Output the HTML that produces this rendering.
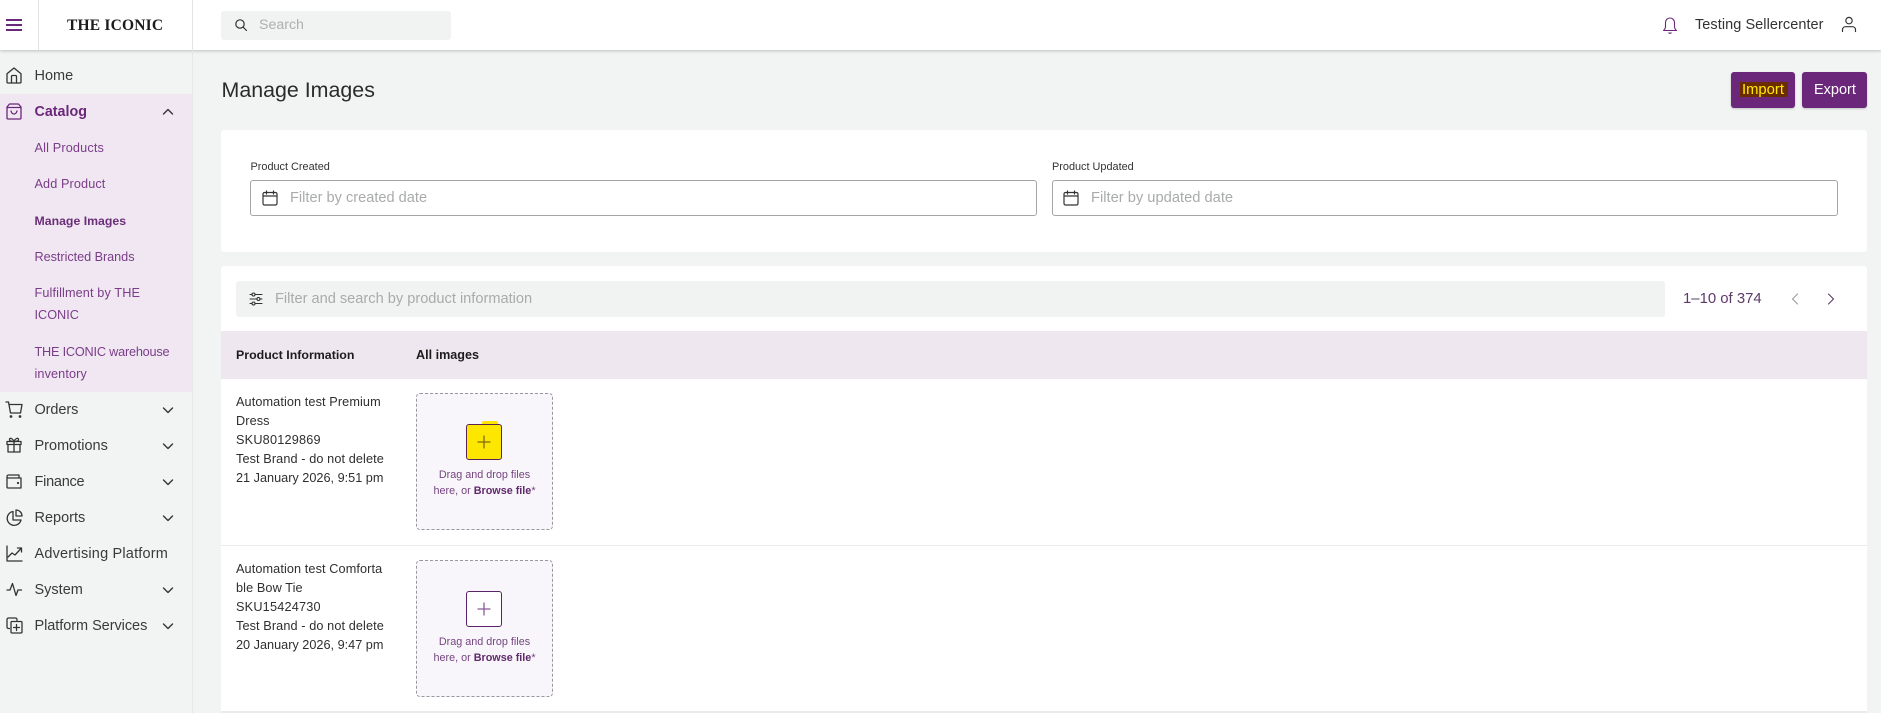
<!DOCTYPE html>
<html lang="en"><head><meta charset="utf-8"><title>Manage Images</title>
<style>
*{box-sizing:border-box}
html,body{margin:0;padding:0;width:1881px;height:713px;overflow:hidden;background:#f2f4f4;font-family:"Liberation Sans",sans-serif;color:#2b2b2b}
.a{position:absolute}
.t{position:absolute;white-space:nowrap;height:20px;line-height:20px}
svg{position:absolute;overflow:visible;fill:none;stroke-linecap:round;stroke-linejoin:round}
.nav{font-size:14.5px;color:#3a3a3a;left:34.5px}
.sub{font-size:12.7px;color:#7a3d87;left:34.5px}
.ic{stroke:#333;stroke-width:1.3}
.row{font-size:12.7px;color:#2f2f2f;left:236px;letter-spacing:.1px}
.dz{position:absolute;left:416px;width:137px;height:137px;border:1px dashed #9a96a0;border-radius:4px;background:#f9f6fb}
.plus{position:absolute;left:466px;width:36px;height:36px;border:1.5px solid #5a2368;border-radius:3px;background:#fff}
.dt{font-size:10.8px;color:#74447f;left:416px;width:137px;text-align:center}
.dt b{color:#5f2a6b}
.ph{font-size:14.6px;color:#a9abab}
.lbl{font-size:10.9px;color:#333}
</style></head><body>

<!-- top bar -->
<div class="a" style="left:0;top:0;width:1881px;height:50px;background:#fff;box-shadow:0 1px 3px rgba(0,0,0,.22)"></div>
<div class="a" style="left:38px;top:0;width:1px;height:50px;background:#e2e3e3"></div>
<div class="a" style="left:192px;top:0;width:1px;height:50px;background:#e2e3e3"></div>
<div class="a" style="left:6px;top:19px;width:16px;height:2px;background:#6b2779"></div>
<div class="a" style="left:6px;top:24px;width:16px;height:2px;background:#6b2779"></div>
<div class="a" style="left:6px;top:29px;width:16px;height:2px;background:#6b2779"></div>
<div class="t" style="left:67px;top:15.5px;font-family:'Liberation Serif',serif;font-weight:bold;font-size:15.5px;color:#1c1c1c;letter-spacing:.2px">THE ICONIC</div>
<div class="a" style="left:221px;top:11px;width:230px;height:29px;background:#f1f3f3;border-radius:3px"></div>
<svg style="left:234px;top:18px" width="14" height="14" viewBox="0 0 14 14" stroke="#333" stroke-width="1.2"><circle cx="6" cy="6" r="4.2"/><path d="M9.2 9.2L12.5 12.5"/></svg>
<div class="t ph" style="left:259px;top:15px;color:#aeb0b0;font-size:14.2px">Search</div>
<svg style="left:1662px;top:15px" width="16" height="20" viewBox="0 0 16 20" stroke="#6b2779" stroke-width="1.1"><path d="M1.5 15.5c1.2-1 1.9-2.2 2-4V7.5a4.5 4.5 0 0 1 9 0v4c.1 1.8.8 3 2 4z"/><path d="M6.8 17.8c.7.6 1.7.6 2.4 0"/></svg>
<div class="t" style="left:1695px;top:15px;font-size:14.5px;color:#333;letter-spacing:.06px">Testing Sellercenter</div>
<svg style="left:1841px;top:16px" width="16" height="17" viewBox="0 0 16 17" stroke="#333" stroke-width="1.2"><circle cx="8" cy="4.6" r="3.2"/><path d="M1.5 15.5v-1.8c0-1.8 1.4-3 3.2-3h6.6c1.8 0 3.2 1.2 3.2 3v1.8"/></svg>

<!-- sidebar -->
<div class="a" style="left:192px;top:50px;width:1px;height:663px;background:#e6e8e8"></div>
<div class="a" style="left:0;top:94px;width:192px;height:298px;background:#f0e7f3"></div>

<svg class="ic" style="left:6px;top:67px" width="16" height="17" viewBox="0 0 16 17"><path d="M1 6.8L8 1l7 5.8V15a1 1 0 0 1-1 1H2a1 1 0 0 1-1-1z"/><path d="M5.5 16V9.5a1 1 0 0 1 1-1h3a1 1 0 0 1 1 1V16"/></svg>
<div class="t nav" style="top:66px">Home</div>
<svg style="left:6px;top:103px" stroke="#6b2779" stroke-width="1.3" width="16" height="17" viewBox="0 0 16 17"><path d="M3.5 1h9L15 4v11a1 1 0 0 1-1 1H2a1 1 0 0 1-1-1V4z"/><path d="M1 4.5h14"/><path d="M5 8c.5 2 1.600 3 3 3s2.500-1 3-3"/></svg>
<div class="t nav" style="top:102px;color:#6b2779;font-weight:bold;font-size:14.3px">Catalog</div>
<svg style="left:162px;top:108px" stroke="#333" stroke-width="1.4" width="12" height="7" viewBox="0 0 12 7"><path d="M1.500 6L6 1.500 10.500 6"/></svg>

<div class="t sub" style="top:138px;letter-spacing:.15px">All Products</div>
<div class="t sub" style="top:174px;letter-spacing:.1px">Add Product</div>
<div class="t sub" style="top:211px;font-weight:bold;color:#6b2f78;font-size:12.3px">Manage Images</div>
<div class="t sub" style="top:247px;letter-spacing:-.05px">Restricted Brands</div>
<div class="t sub" style="top:283px;letter-spacing:.12px">Fulfillment by THE</div>
<div class="t sub" style="top:305px">ICONIC</div>
<div class="t sub" style="top:342px;letter-spacing:-.2px">THE ICONIC warehouse</div>
<div class="t sub" style="top:364px;letter-spacing:.1px">inventory</div>

<svg class="ic" style="left:5px;top:401px" width="18" height="17" viewBox="0 0 18 17"><path d="M1 1h2.500l2 11h10l1.500-8.500H4"/><circle cx="6" cy="15.500" r=".7"/><circle cx="15" cy="15.500" r=".7"/></svg>
<div class="t nav" style="top:400px;letter-spacing:-.1px">Orders</div>
<svg class="ic" style="left:6px;top:437px" width="16" height="16" viewBox="0 0 16 16"><path d="M1 4.500h14v3H1zM2 7.500V15h12V7.500M8 4.500V15"/><path d="M8 4.500C6.500 1 3.500.500 3.500 2.500S6 4.500 8 4.500zM8 4.500C9.500 1 12.500.500 12.500 2.500S10 4.500 8 4.500z"/></svg>
<div class="t nav" style="top:436px">Promotions</div>
<svg class="ic" style="left:6px;top:474px" width="16" height="15" viewBox="0 0 16 15"><path d="M1 3.500V13a1 1 0 0 0 1 1h13V4H2.500A1.500 1.500 0 0 1 1 2.500 1.500 1.500 0 0 1 2.500 1H13v3"/><circle cx="12" cy="9" r=".5"/></svg>
<div class="t nav" style="top:472px;letter-spacing:-.25px">Finance</div>
<svg class="ic" style="left:6px;top:509px" width="17" height="17" viewBox="0 0 17 17"><path d="M7 2.500a7 7 0 1 0 8 8.500H7z"/><path d="M10 1a6 6 0 0 1 6 6h-6z"/></svg>
<div class="t nav" style="top:508px">Reports</div>
<svg class="ic" style="left:6px;top:545px" width="17" height="17" viewBox="0 0 17 17"><path d="M1 1v15h15"/><path d="M2 12l4-4 3 2 6-6.500"/><path d="M11.500 3H15.500V7"/></svg>
<div class="t nav" style="top:544px;letter-spacing:.19px">Advertising Platform</div>
<svg class="ic" style="left:6px;top:582px" width="17" height="15" viewBox="0 0 17 15"><path d="M1 8h3l2.500-6.500 3.500 12 2-5.500h3.500"/></svg>
<div class="t nav" style="top:580px">System</div>
<svg class="ic" style="left:6px;top:617px" width="17" height="17" viewBox="0 0 17 17"><path d="M3.500 11.500H2.500a1.500 1.500 0 0 1-1.500-1.500V2.500A1.500 1.500 0 0 1 2.500 1h7A1.500 1.500 0 0 1 11 2.500v1"/><rect x="5" y="4.500" width="11" height="11.500" rx="1"/><path d="M10.500 7.500v6M7.500 10.500h6"/></svg>
<div class="t nav" style="top:616px;letter-spacing:-.05px">Platform Services</div>

<svg style="left:162px;top:407px" stroke="#333" stroke-width="1.4" width="12" height="7" viewBox="0 0 12 7"><path d="M1.500 1L6 5.500 10.500 1"/></svg>
<svg style="left:162px;top:443px" stroke="#333" stroke-width="1.4" width="12" height="7" viewBox="0 0 12 7"><path d="M1.500 1L6 5.500 10.500 1"/></svg>
<svg style="left:162px;top:479px" stroke="#333" stroke-width="1.4" width="12" height="7" viewBox="0 0 12 7"><path d="M1.500 1L6 5.500 10.500 1"/></svg>
<svg style="left:162px;top:515px" stroke="#333" stroke-width="1.4" width="12" height="7" viewBox="0 0 12 7"><path d="M1.500 1L6 5.500 10.500 1"/></svg>
<svg style="left:162px;top:587px" stroke="#333" stroke-width="1.4" width="12" height="7" viewBox="0 0 12 7"><path d="M1.500 1L6 5.500 10.500 1"/></svg>
<svg style="left:162px;top:623px" stroke="#333" stroke-width="1.4" width="12" height="7" viewBox="0 0 12 7"><path d="M1.500 1L6 5.500 10.500 1"/></svg>

<!-- header -->
<div class="t" style="left:221.500px;top:78px;height:24px;line-height:24px;font-size:21.4px;color:#2b2b2b">Manage Images</div>
<div class="a" style="left:1731px;top:72px;width:64px;height:36px;background:#6b2779;border-radius:3px;box-shadow:0 1px 2px rgba(0,0,0,.2)"></div>
<div class="a" style="left:1740px;top:82px;width:48px;height:15px;background:#6b2c00"></div>
<div class="t" style="left:1742px;top:80px;font-size:14.8px;color:#ffee00">Import</div>
<div class="a" style="left:1802px;top:72px;width:65px;height:36px;background:#6b2779;border-radius:3px;box-shadow:0 1px 2px rgba(0,0,0,.2)"></div>
<div class="t" style="left:1814px;top:80px;font-size:14.5px;color:#fff">Export</div>

<!-- filter card -->
<div class="a" style="left:221px;top:130px;width:1646px;height:122px;background:#fff;border-radius:3px"></div>
<div class="t lbl" style="left:250.500px;top:157px">Product Created</div>
<div class="t lbl" style="left:1052px;top:157px">Product Updated</div>
<div class="a" style="left:250px;top:180px;width:787px;height:36px;border:1px solid #a5a5a5;border-radius:3px"></div>
<div class="a" style="left:1052px;top:180px;width:786px;height:36px;border:1px solid #a5a5a5;border-radius:3px"></div>
<svg style="left:262px;top:190px" stroke="#333" stroke-width="1.200" width="16" height="16" viewBox="0 0 16 16"><rect x="1" y="2.500" width="14" height="12.500" rx="1.500"/><path d="M1 6h14M4.500 1v3M11.500 1v3"/></svg>
<svg style="left:1063px;top:190px" stroke="#333" stroke-width="1.200" width="16" height="16" viewBox="0 0 16 16"><rect x="1" y="2.500" width="14" height="12.500" rx="1.500"/><path d="M1 6h14M4.500 1v3M11.500 1v3"/></svg>
<div class="t ph" style="left:290px;top:188px">Filter by created date</div>
<div class="t ph" style="left:1091px;top:188px;font-size:14.7px">Filter by updated date</div>

<!-- table card -->
<div class="a" style="left:221px;top:266px;width:1646px;height:447px;background:#fff;border-radius:3px 3px 0 0"></div>
<div class="a" style="left:236px;top:281px;width:1429px;height:36px;background:#f1f3f3;border-radius:3px"></div>
<svg style="left:249px;top:292px" stroke="#333" stroke-width="1.100" width="14" height="14" viewBox="0 0 14 14"><path d="M1 2.500h2M6 2.500h7M1 7h7M11 7h2M1 11.500h2M6 11.500h7"/><circle cx="4.500" cy="2.500" r="1.500"/><circle cx="9.500" cy="7" r="1.500"/><circle cx="4.500" cy="11.500" r="1.500"/></svg>
<div class="t ph" style="left:275px;top:289px">Filter and search by product information</div>
<div class="t" style="left:1683px;top:289px;font-size:14.9px;color:#5e3a68">1–10 of 374</div>
<svg style="left:1791px;top:292px" stroke="#9a9a9a" stroke-width="1.100" width="8" height="14" viewBox="0 0 8 14"><path d="M6.500 2L1.500 7l5 5"/></svg>
<svg style="left:1827px;top:292px" stroke="#5e3a68" stroke-width="1.100" width="8" height="14" viewBox="0 0 8 14"><path d="M1.500 2l5 5-5 5"/></svg>

<div class="a" style="left:221px;top:331px;width:1646px;height:48px;background:#efe7f0"></div>
<div class="t" style="left:236px;top:345px;font-size:12.4px;font-weight:bold;color:#1c1c1c">Product Information</div>
<div class="t" style="left:416px;top:345px;font-size:12.6px;font-weight:bold;color:#1c1c1c">All images</div>

<div class="t row" style="top:392px">Automation test Premium</div>
<div class="t row" style="top:411px">Dress</div>
<div class="t row" style="top:430px;letter-spacing:.2px">SKU80129869</div>
<div class="t row" style="top:449px">Test Brand - do not delete</div>
<div class="t row" style="top:468px;letter-spacing:0">21 January 2026, 9:51 pm</div>

<div class="dz" style="top:393px"></div>
<div class="a" style="left:482px;top:421px;width:16px;height:5px;background:#fde600;border-radius:2px 2px 0 0"></div>
<div class="plus" style="top:424px;background:#fde600;border-color:#5a2350"></div>
<svg style="left:477px;top:435px" stroke="#7f6a10" stroke-width="1.300" width="14" height="14" viewBox="0 0 14 14"><path d="M7 1v12M1 7h12"/></svg>
<div class="t dt" style="top:465px">Drag and drop files</div>
<div class="t dt" style="top:481px">here, or <b>Browse file</b>*</div>

<div class="a" style="left:221px;top:545px;width:1646px;height:1px;background:#e9eaea"></div>

<div class="t row" style="top:559px">Automation test Comforta</div>
<div class="t row" style="top:578px">ble Bow Tie</div>
<div class="t row" style="top:597px;letter-spacing:.2px">SKU15424730</div>
<div class="t row" style="top:616px">Test Brand - do not delete</div>
<div class="t row" style="top:635px;letter-spacing:0">20 January 2026, 9:47 pm</div>

<div class="dz" style="top:560px"></div>
<div class="plus" style="top:591px"></div>
<svg style="left:477px;top:602px" stroke="#8a5a96" stroke-width="1.300" width="14" height="14" viewBox="0 0 14 14"><path d="M7 1v12M1 7h12"/></svg>
<div class="t dt" style="top:632px">Drag and drop files</div>
<div class="t dt" style="top:648px">here, or <b>Browse file</b>*</div>

<div class="a" style="left:221px;top:711px;width:1646px;height:2px;background:#e9eaea"></div>
</body></html>
